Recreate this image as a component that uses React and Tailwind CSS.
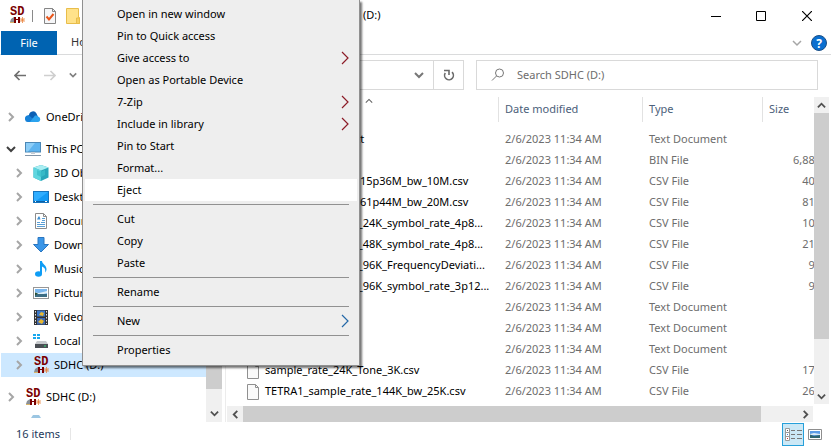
import React from 'react';

const MAROON = '#7b0000';

function SdIcon() {
  return (
    <svg width="16" height="17" viewBox="0 0 16 17" className="shrink-0 overflow-visible" aria-hidden="true">
      <text x="1" y="8" fontFamily="Liberation Mono, monospace" fontWeight="700" fontSize="12" fill={MAROON}>SD</text>
      <path d="M1 15l1-3 3-2v5z" fill="#8a8f96" />
      <path d="M1 15h4v1H1z" fill="#d8b56a" />
      <path d="M5 10h2v2h2v-2h2v6H9v-3H7v3H5z" fill={MAROON} />
      <path d="M11 13h5M13.500 10v6M11.500 11l4 4M15.500 11l-4 4" stroke="#e9823a" strokeWidth="0.800" />
    </svg>
  );
}

function Chevron({ dir = 'right', size = 9, color = '#a6a6a6', width = 2 }) {
  const paths = {
    right: 'M3 1 L7 5 L3 9',
    left: 'M7 1 L3 5 L7 9',
    down: 'M1 3 L5 7 L9 3',
    up: 'M1 7 L5 3 L9 7',
  };
  return (
    <svg width={size} height={size} viewBox="0 0 10 10" fill="none" stroke={color} strokeWidth={width} className="shrink-0" aria-hidden="true">
      <path d={paths[dir]} />
    </svg>
  );
}

const icons = {
  onedrive: (
    <>
      <path d="M4 6a4 4 0 0 1 7.500-1.500L13 8 7 10 3 7z" fill="#0a5fb4" />
      <path d="M0 10.500a3.500 3.500 0 0 1 4-4.300L11 13H3.500A3 3 0 0 1 0 10.500z" fill="#1681d8" />
      <path d="M10 6.500a3.500 3.500 0 0 1 3.500 1.200 2.800 2.800 0 0 1-.3 5.300H5z" fill="#2ba3ee" />
    </>
  ),
  pc: (
    <>
      <rect x="0.500" y="1.500" width="15" height="9.500" fill="#5db3ef" stroke="#4b87b5" />
      <path d="M1 2h9L3 10.500H1z" fill="#8ccdf7" />
      <path d="M6 11h4v2H6z" fill="#c4ccd4" />
      <path d="M0 14.500h16" stroke="#8295a8" />
    </>
  ),
  cube: (
    <>
      <path d="M8 0l7.500 2.500v10L8 16 .5 12.500v-10z" fill="#2aa7ba" />
      <path d="M8 0l7.500 2.500L8 5.500.5 2.500z" fill="#a9eef2" />
      <path d="M.5 2.500L8 5.500V16L.5 12.500z" fill="#5fd6df" />
      <path d="M4 5l4 1.500L12 5v5l-4 2-4-2z" fill="#3bbfcb" opacity=".8" />
    </>
  ),
  desktop: (
    <>
      <rect x="0.500" y="2.500" width="15" height="11" fill="#139af5" stroke="#1674be" />
      <path d="M1 3h14L3 12H1z" fill="#2fadff" />
      <path d="M1 12.500h14" stroke="#0a5fa5" />
      <path d="M2 12.500h1M12 12.500h2" stroke="#fff" />
    </>
  ),
  doc: (
    <>
      <path d="M2.500.5h8l3 3v12h-11z" fill="#fff" stroke="#8b8b8b" />
      <path d="M10.500.5v3h3" fill="none" stroke="#8b8b8b" />
      <path d="M4 6.500l1.500-3h1l1 3z" fill="#3f8fd0" />
      <path d="M9 5.500h3M9 7.500h3M4 9.500h3M8 9.500h4M4 11.500h8M4 13.500h8" stroke="#5a9fd6" />
    </>
  ),
  download: <path d="M5 0.500h6v7h4.500L8 15 .5 7.500H5z" fill="#3a96e8" stroke="#2a76c0" />,
  music: (
    <>
      <path d="M7 0h2c0 3 4.500 4 4.500 8 0 1.500-.5 2.500-1.500 3.500 1-3-.5-5-3-6V13H7z" fill="#0f9df5" />
      <ellipse cx="5.500" cy="13" rx="3.500" ry="2.800" fill="#0f9df5" />
    </>
  ),
  picture: (
    <>
      <rect x="0.500" y="2.500" width="15" height="11" fill="#fff" stroke="#979797" />
      <path d="M2 4h12v8H2z" fill="#79b6ee" />
      <path d="M2 7.500l4 .5 8-2v2l-5 1.500H2z" fill="#dfeef7" />
      <path d="M2 8.500l3 .5h9v3H2z" fill="#3c6d84" />
      <path d="M2 7.500l3 1-3 2z" fill="#285034" />
    </>
  ),
  video: (
    <>
      <path d="M1 1h14v15H1z" fill="#333" />
      <path d="M4 1.500h8v6H4z" fill="#3c78c8" />
      <path d="M4 9h8v6.500H4z" fill="#3c68b4" />
      <path d="M6 6l2-3 3 1-1 3zM5 13l3-3 3 2-2 3z" fill="#e8b830" />
      <path d="M2.500 2v13M13.500 2v13" stroke="#e4e4e4" strokeDasharray="1.500 1.500" />
    </>
  ),
  drive: (
    <>
      <path d="M0 1h3v2H0zM4 1h3v2H4zM0 4h3v2H0zM4 4h3v2H4z" fill="#18a8ee" />
      <path d="M4 8h9l2 3H2z" fill="#c6c9cc" />
      <path d="M2 11h13v4H2z" fill="#4b4f54" />
      <path d="M11 13h2" stroke="#35e07a" />
    </>
  ),
  network: <path d="M4 2h6l2 3H2z" fill="#9cc6e2" />,
};

function Icon({ name }) {
  if (name === 'sd') return <SdIcon />;
  return (
    <svg width="16" height="16" viewBox="0 0 16 16" className="shrink-0" aria-hidden="true">
      {icons[name]}
    </svg>
  );
}

const tree = [
  { label: 'OneDrive', icon: 'onedrive', gap: true },
  { label: 'This PC', icon: 'pc', open: true },
  { label: '3D Objects', icon: 'cube', child: true },
  { label: 'Desktop', icon: 'desktop', child: true },
  { label: 'Documents', icon: 'doc', child: true },
  { label: 'Downloads', icon: 'download', child: true },
  { label: 'Music', icon: 'music', child: true },
  { label: 'Pictures', icon: 'picture', child: true },
  { label: 'Videos', icon: 'video', child: true },
  { label: 'Local Disk (C:)', icon: 'drive', child: true },
  { label: 'SDHC (D:)', icon: 'sd', child: true, selected: true, gap: true },
  { label: 'SDHC (D:)', icon: 'sd', gap: true },
];

const files = [
  ['default_settings.txt', 'Text Document', '1 KB'],
  ['firmware.bin', 'BIN File', '6,889 KB'],
  ['LTE1_sample_rate 15p36M_bw_10M.csv', 'CSV File', '408 KB'],
  ['LTE1_sample_rate 61p44M_bw_20M.csv', 'CSV File', '811 KB'],
  ['DMR_sample_rate_24K_symbol_rate_4p8...', 'CSV File', '109 KB'],
  ['DMR_sample_rate_48K_symbol_rate_4p8...', 'CSV File', '218 KB'],
  ['DMR_sample_rate_96K_FrequencyDeviati...', 'CSV File', '91 KB'],
  ['DMR_sample_rate_96K_symbol_rate_3p12...', 'CSV File', '91 KB'],
  ['license.txt', 'Text Document', ''],
  ['notes.txt', 'Text Document', ''],
  ['readme.txt', 'Text Document', ''],
  ['sample_rate_24K_Tone_3K.csv', 'CSV File', '178 KB'],
  ['TETRA1_sample_rate_144K_bw_25K.csv', 'CSV File', '266 KB'],
];

const menu = [
  ['Open in new window'],
  ['Pin to Quick access'],
  ['Give access to', '#8c1c28'],
  ['Open as Portable Device'],
  ['7-Zip', '#8c1c28'],
  ['Include in library', '#8c1c28'],
  ['Pin to Start'],
  ['Format...'],
  ['Eject'],
  null,
  ['Cut'],
  ['Copy'],
  ['Paste'],
  null,
  ['Rename'],
  null,
  ['New', '#2468a8'],
  null,
  ['Properties'],
];

function FileIcon() {
  return (
    <svg width="12" height="16" viewBox="0 0 12 16" className="shrink-0" aria-hidden="true">
      <path d="M.5.5h8l3 3v12H.5z" fill="#fafafa" stroke="#909090" />
      <path d="M8.500.5v3h3" fill="none" stroke="#909090" />
    </svg>
  );
}

function TitleBar() {
  return (
    <header className="flex h-[31px] shrink-0 items-center pl-[9px]">
      <SdIcon />
      <span className="ml-[7px] h-3 w-px bg-[#8a8a8a]" />
      <button aria-label="Properties" className="ml-[11px]">
        <svg width="12" height="16" viewBox="0 0 12 16">
          <path d="M.5.5h8l3 3v12H.5z" fill="#f5f6f8" stroke="#858585" />
          <path d="M8.500.5v3h3" fill="none" stroke="#858585" />
          <path d="M2.500 8.500l2.500 3 4.500-5.500" fill="none" stroke="#e8561c" strokeWidth="2" />
        </svg>
      </button>
      <button aria-label="New folder" className="ml-2.5">
        <svg width="14" height="16" viewBox="0 0 14 16">
          <path d="M.5.5h12v9h1v6H.5z" fill="#ffe28a" stroke="#e8bd4a" />
          <path d="M10.500 10v5.500h3V10z" fill="#f6cf63" stroke="#e8bd4a" />
        </svg>
      </button>
      <h1 className="ml-[251px] text-[11px] text-black">SDHC (D:)</h1>
      <div className="ml-auto flex h-full">
        <button aria-label="Minimize" className="grid w-[46px] place-items-center">
          <svg width="10" height="10" viewBox="0 0 10 10"><path d="M0 5.500h10" stroke="#000" /></svg>
        </button>
        <button aria-label="Maximize" className="grid w-[44px] place-items-center">
          <svg width="10" height="10" viewBox="0 0 10 10"><path d="M.5.5h9v9h-9z" fill="none" stroke="#000" /></svg>
        </button>
        <button aria-label="Close" className="grid w-[48px] place-items-center">
          <svg width="10" height="10" viewBox="0 0 10 10"><path d="M0 0l10 10M10 0L0 10" stroke="#000" strokeWidth="1.200" /></svg>
        </button>
      </div>
    </header>
  );
}

function Ribbon() {
  return (
    <nav className="flex h-6 shrink-0 items-stretch border-b border-[#dadbdc] pl-px text-[11px]">
      <button className="-mb-px w-14 bg-[#0063b1] text-white">File</button>
      <button className="ml-3.5 text-[#333]">Home</button>
      <div className="ml-auto flex items-center gap-[9px] pr-[4px]">
        <button aria-label="Expand the Ribbon"><Chevron dir="down" size={10} width={1.500} /></button>
        <button aria-label="Help">
          <svg width="16" height="16" viewBox="0 0 16 16">
            <circle cx="8" cy="8" r="7.500" fill="#0a6fd0" stroke="#1b4f86" />
            <text x="8" y="12.500" textAnchor="middle" fontFamily="Noto Sans, sans-serif" fontWeight="700" fontSize="12" fill="#fff">?</text>
          </svg>
        </button>
      </div>
    </nav>
  );
}

function Arrow({ color, flip }) {
  return (
    <svg width="12" height="11" viewBox="0 0 12 11" fill="none" stroke={color} strokeWidth="1.700">
      <path d={flip ? 'M0 5.500h11M6.500 1l4.500 4.500L6.500 10' : 'M12 5.500H1M5.500 1L1 5.500 5.500 10'} />
    </svg>
  );
}

function AddressRow() {
  return (
    <div className="flex h-[42px] shrink-0 items-start pt-[5px] pr-[13px] pl-3.5">
      <div className="flex h-[30px] items-center">
        <button aria-label="Back"><Arrow color="#6f6f6f" /></button>
        <button aria-label="Forward" className="ml-[18px]"><Arrow color="#cfcfcf" flip /></button>
        <button aria-label="Recent locations" className="ml-[13px]"><Chevron dir="down" size={8} color="#808080" /></button>
      </div>
      <div className="ml-10 flex h-[30px] min-w-0 flex-1 border border-[#d9d9d9]">
        <span className="flex-1" />
        <button aria-label="Previous locations" className="grid w-[29px] place-items-center">
          <Chevron dir="down" size={10} color="#777" />
        </button>
        <button aria-label="Refresh" className="grid w-[30px] place-items-center border-l border-[#d9d9d9]">
          <svg width="12" height="12" viewBox="0 0 12 12" fill="none" stroke="#6a6a6a" strokeWidth="1.600">
            <path d="M2.300 4A4.400 4.400 0 1 0 9 3.200" />
            <path d="M1 1.500h5v4.500" />
          </svg>
        </button>
      </div>
      <label className="ml-3 flex h-[30px] w-[342px] items-center border border-[#d9d9d9] pl-3.5">
        <svg width="14" height="14" viewBox="0 0 14 14" fill="none" stroke="#777" aria-hidden="true">
          <circle cx="8.500" cy="5" r="4" />
          <path d="M5.500 8L1 12.500" />
        </svg>
        <input type="text" aria-label="Search SDHC (D:)" placeholder="Search SDHC (D:)" className="ml-3 min-w-0 flex-1 bg-transparent text-[11px] outline-none placeholder:text-[#6d6d6d]" />
      </label>
    </div>
  );
}

function Tree() {
  return (
    <aside className="flex w-[226px] shrink-0 border-r border-[#ececec]">
      <ul className="min-w-0 flex-1 overflow-hidden pt-2 pl-px">
        {tree.map((n, i) => (
          <li key={i} className={n.gap ? 'mb-2' : ''}>
            <button className={`flex h-6 w-full items-center text-left text-[11px] whitespace-nowrap text-black ${n.child ? 'pl-[13px]' : 'pl-[5px]'} ${n.selected ? 'bg-[#cde8ff]' : ''}`}>
              <Chevron dir={n.open ? 'down' : 'right'} size={10} color={n.open ? '#404040' : '#a6a6a6'} />
              <span className="mr-[5px] ml-[9px] flex"><Icon name={n.icon} /></span>
              {n.label}
            </button>
          </li>
        ))}
        <li className="-mt-1 pl-7"><Icon name="network" /></li>
      </ul>
      <div className="mr-[3px] flex w-4 shrink-0 flex-col bg-[#f0f0f0]">
        <div className="h-[292px] bg-[#cdcdcd]" />
        <button aria-label="Scroll down" className="mt-auto grid h-[17px] place-items-center"><Chevron dir="down" color="#505050" /></button>
      </div>
    </aside>
  );
}

function FileList() {
  const head = 'h-[25px] p-0 text-left font-normal text-[#4c607a]';
  const cell = 'flex h-[25px] items-center border-l border-[#e2e2e2] pl-1.5';
  return (
    <main className="flex min-w-0 flex-1 flex-col">
      <div className="flex min-h-0 flex-1 pr-0.5">
        <div className="min-w-0 flex-1 overflow-hidden">
          <table className="w-[calc(100%+32px)] table-fixed border-collapse text-[11px] whitespace-nowrap text-[#6d6d6d]">
            <colgroup>
              <col />
              <col className="w-[144px]" />
              <col className="w-[120px]" />
              <col className="w-[84px]" />
            </colgroup>
            <thead>
              <tr>
                <th className={head}>
                  <div className="flex h-[25px] items-start justify-center pl-[13px]">
                    <Chevron dir="up" size={8} color="#606060" width={1.300} />
                  </div>
                </th>
                <th className={head}><div className={cell}>Date modified</div></th>
                <th className={head}><div className={cell}>Type</div></th>
                <th className={head}><div className={cell}>Size</div></th>
              </tr>
            </thead>
            <tbody>
              <tr className="h-[7px]"><td colSpan={4} className="p-0" /></tr>
              {files.map(([name, type, size]) => (
                <tr key={name} className="h-[21px]">
                  <td className="p-0 pl-[21px]"><span className="flex items-center gap-1.5 text-black"><FileIcon />{name}</span></td>
                  <td className="p-0 pl-[7px]">2/6/2023 11:34 AM</td>
                  <td className="p-0 pl-[7px]">{type}</td>
                  <td className="p-0 pr-2 text-right">{size}</td>
                </tr>
              ))}
              <tr><td className="p-0 pt-0.5 pl-[21px]"><FileIcon /></td></tr>
            </tbody>
          </table>
        </div>
        <div className="flex w-[15px] shrink-0 flex-col bg-[#f0f0f0]">
          <button aria-label="Scroll up" className="grid h-4 place-items-center"><Chevron dir="up" color="#505050" /></button>
          <div className="h-[226px] bg-[#cdcdcd]" />
          <button aria-label="Scroll files down" className="mt-auto grid h-4 place-items-center"><Chevron dir="down" color="#505050" /></button>
        </div>
      </div>
      <div className="mt-0.5 mr-[18px] ml-px flex h-4 shrink-0 bg-[#f0f0f0]">
        <button aria-label="Scroll left" className="grid w-4 place-items-center"><Chevron dir="left" color="#505050" /></button>
        <div className="mr-9 flex-1 bg-[#cdcdcd]" />
        <button aria-label="Scroll right" className="grid w-4 place-items-center"><Chevron color="#505050" /></button>
      </div>
    </main>
  );
}

function StatusBar() {
  return (
    <footer className="flex h-6 shrink-0 items-center pr-[9px] pl-4 text-[11px] text-[#1e395b]">
      <span>16 items</span>
      <span className="ml-2.5 h-3 w-px bg-[#e6e6e6]" />
      <button aria-label="Details view" className="ml-auto grid h-[23px] w-[22px] place-items-center border border-[#26a0da] bg-[#cbe8f6]">
        <svg width="17" height="13" viewBox="0 0 17 13">
          <path d="M.5.5h4v12h-4zM.5 4.500h4M.5 8.500h4" fill="#fff" stroke="#999" />
          <path d="M2 2.500h1" stroke="#555" /><path d="M2 6.500h1" stroke="#3b82d0" /><path d="M2 10.500h1" stroke="#d03030" />
          <path d="M6 2.500h4M12 2.500h5M6 6.500h4M12 6.500h5M6 10.500h4M12 10.500h5" stroke="#777" />
        </svg>
      </button>
      <button aria-label="Large thumbnails" className="ml-1">
        <svg width="14" height="11" viewBox="0 0 14 11">
          <path d="M.5.5h13v10H.5z" fill="#fff" stroke="#8e8e8e" />
          <path d="M2 2h10v7H2z" fill="#5b9be6" />
          <path d="M2 5l4-1 6 1v1H2z" fill="#dcebf7" />
          <path d="M2 5.500l4 1.500 6-1v3H2z" fill="#2f6470" />
        </svg>
      </button>
    </footer>
  );
}

function ContextMenu() {
  return (
    <div role="menu" className="absolute top-0 left-[82px] w-[278px] border-r border-b border-l border-[#909090] bg-[#eeeeee] pt-[3px] pr-0.5 pb-1 pl-0.5 shadow-[2px_2px_2px_rgba(0,0,0,0.55)]">
      {menu.map((m, i) =>
        m ? (
          <button key={i} role="menuitem" className={`flex h-[22px] w-full items-center justify-between pr-[7px] pl-8 text-[11px] text-black ${m[0] === 'Eject' ? 'bg-white' : ''}`}>
            {m[0]}
            {m[1] && (
              <svg width="9" height="14" viewBox="0 0 9 14" fill="none" stroke={m[1]} strokeWidth="1.200" aria-hidden="true">
                <path d="M1 1l6 6-6 6" />
              </svg>
            )}
          </button>
        ) : (
          <div key={i} role="separator" className="h-[7px] px-2 pt-[3px]"><div className="h-px bg-[#919191]" /></div>
        )
      )}
    </div>
  );
}

export default function App() {
  return (
    <div className="relative flex h-screen flex-col overflow-hidden bg-white font-['Noto_Sans',sans-serif]">
      <TitleBar />
      <Ribbon />
      <AddressRow />
      <div className="flex min-h-0 flex-1">
        <Tree />
        <FileList />
      </div>
      <StatusBar />
      <ContextMenu />
    </div>
  );
}
